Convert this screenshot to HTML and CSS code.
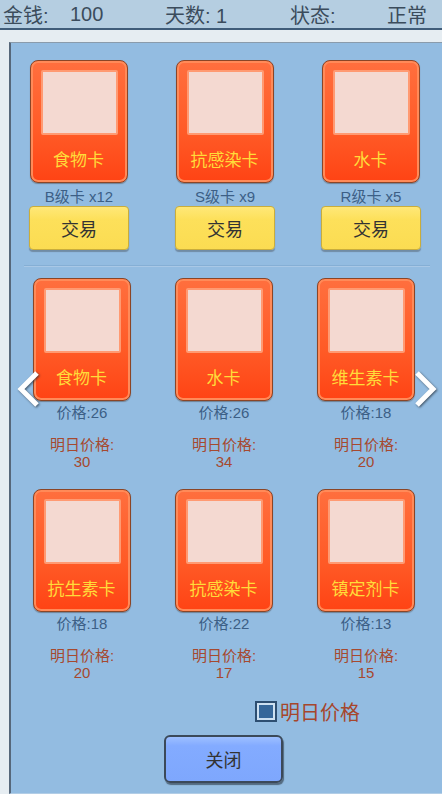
FILE: index.html
```html
<!DOCTYPE html>
<html lang="zh">
<head>
    <meta charset="UTF-8">
    <meta name="viewport" content="width=device-width, initial-scale=1.0">
    <title>卡牌交易</title>
    <link rel="stylesheet" href="styles.css">
</head>
<body>
    <div class="topbar">
        <span class="stat stat-money">金钱:</span>
        <span class="stat stat-money-val">100</span>
        <span class="stat stat-day">天数: 1</span>
        <span class="stat stat-state">状态:</span>
        <span class="stat">正常</span>
    </div>

    <div class="panel">
        <!-- owned cards -->
        <div class="owned">
            <div class="owned-item">
                <div class="card"><div class="card-pic"></div><div class="card-name">食物卡</div></div>
                <div class="grade">B级卡 x12</div>
                <button class="trade-btn">交易</button>
            </div>
            <div class="owned-item">
                <div class="card"><div class="card-pic"></div><div class="card-name">抗感染卡</div></div>
                <div class="grade">S级卡 x9</div>
                <button class="trade-btn">交易</button>
            </div>
            <div class="owned-item">
                <div class="card"><div class="card-pic"></div><div class="card-name">水卡</div></div>
                <div class="grade">R级卡 x5</div>
                <button class="trade-btn">交易</button>
            </div>
        </div>

        <div class="divider"></div>

        <!-- market -->
        <div class="market">
            <div class="market-item">
                <div class="card"><div class="card-pic"></div><div class="card-name">食物卡</div></div>
                <div class="price">价格:26</div>
                <div class="next-label">明日价格:</div>
                <div class="next-val">30</div>
            </div>
            <div class="market-item">
                <div class="card"><div class="card-pic"></div><div class="card-name">水卡</div></div>
                <div class="price">价格:26</div>
                <div class="next-label">明日价格:</div>
                <div class="next-val">34</div>
            </div>
            <div class="market-item">
                <div class="card"><div class="card-pic"></div><div class="card-name">维生素卡</div></div>
                <div class="price">价格:18</div>
                <div class="next-label">明日价格:</div>
                <div class="next-val">20</div>
            </div>
            <div class="market-item">
                <div class="card"><div class="card-pic"></div><div class="card-name">抗生素卡</div></div>
                <div class="price">价格:18</div>
                <div class="next-label">明日价格:</div>
                <div class="next-val">20</div>
            </div>
            <div class="market-item">
                <div class="card"><div class="card-pic"></div><div class="card-name">抗感染卡</div></div>
                <div class="price">价格:22</div>
                <div class="next-label">明日价格:</div>
                <div class="next-val">17</div>
            </div>
            <div class="market-item">
                <div class="card"><div class="card-pic"></div><div class="card-name">镇定剂卡</div></div>
                <div class="price">价格:13</div>
                <div class="next-label">明日价格:</div>
                <div class="next-val">15</div>
            </div>
        </div>

        <label class="toggle">
            <span class="checkbox"><span class="checkbox-fill"></span></span>
            <span class="toggle-text">明日价格</span>
        </label>

        <button class="close-btn">关闭</button>

        <svg class="arrow arrow-left" width="28" height="42" viewBox="0 0 28 42">
            <polyline points="22,5 6,21 22,37" />
        </svg>
        <svg class="arrow arrow-right" width="28" height="42" viewBox="0 0 28 42">
            <polyline points="6,5 22,21 6,37" />
        </svg>
    </div>
</body>
</html>
```

FILE: styles.css
```css
body {
    margin: 0;
    background-color: #e6edf2;
    font-family: "Liberation Sans", "Noto Sans CJK SC", sans-serif;
    width: 442px;
    height: 794px;
    overflow: hidden;
}
.topbar {
    height: 28px;
    background-color: #b5cee1;
    border-bottom: 2px solid #3f5c79;
    display: flex;
    align-items: center;
    padding-left: 3px;
    color: #3b4c5c;
    font-size: 20px;
}
.stat-money { width: 67px; }
.stat-money-val { width: 95px; }
.stat-day { width: 125px; }
.stat-state { width: 97px; }

.panel {
    position: relative;
    box-sizing: border-box;
    margin: 12px 0 0 9px;
    height: 752px;
    background-color: #93bce1;
    border-left: 2px solid #56677a;
    border-top: 1px solid #8a9bab;
    border-bottom: 1px solid #b2cde6;
    padding-top: 17px;
}

.owned {
    display: grid;
    grid-template-columns: repeat(3, 100px);
    column-gap: 46px;
    padding-left: 18px;
}
.owned-item {
    display: flex;
    flex-direction: column;
    align-items: center;
}
.card {
    box-sizing: border-box;
    width: 98px;
    height: 123px;
    border: 1px solid #8b4526;
    border-radius: 8px;
    background: linear-gradient(#ff6f3e, #ff5a26 60%, #ff4314);
    box-shadow: inset 0 0 0 2px #ff8a58, 0 1px 1px rgba(60, 40, 30, 0.4);
    padding: 9px 9px 0 10px;
    display: flex;
    flex-direction: column;
}
.card-pic {
    height: 65px;
    background-color: #f4d9d1;
    border: 2px solid #ff9a72;
    border-radius: 2px;
    box-sizing: border-box;
}
.card-name {
    flex: 1;
    display: flex;
    align-items: center;
    justify-content: center;
    color: #ffdc3a;
    font-family: "Noto Sans CJK SC", sans-serif;
    font-size: 17px;
    margin-left: -2px;
}
.grade {
    margin-top: 5px;
    line-height: 18px;
    font-size: 15px;
    color: #3c5f86;
}
.trade-btn {
    width: 100px;
    height: 44px;
    border: 1px solid #c9ad3c;
    border-radius: 4px;
    background: linear-gradient(#ffe878, #fde05a 30%, #fbdc52);
    box-shadow: 0 2px 1px rgba(70, 80, 90, 0.45);
    font-family: "Noto Sans CJK SC", sans-serif;
    font-size: 18px;
    color: #333;
    padding: 0;
}

.divider {
    margin: 15px 12px 0 13px;
    height: 1px;
    background-color: #85afd5;
    border-bottom: 1px solid #a9c8e6;
}

.market {
    display: grid;
    grid-template-columns: repeat(3, 98px);
    column-gap: 44px;
    row-gap: 19px;
    padding-left: 22px;
    margin-top: 11px;
}
.market-item {
    display: flex;
    flex-direction: column;
    align-items: center;
}
.price {
    margin-top: 3px;
    line-height: 18px;
    font-size: 15px;
    color: #3c5f86;
}
.next-label {
    margin-top: 14px;
    line-height: 17px;
    font-size: 15px;
    color: #a6492f;
}
.next-val {
    line-height: 17px;
    font-size: 15px;
    color: #a6492f;
}

.toggle {
    display: flex;
    align-items: center;
    margin: 19px 0 0 244px;
    height: 22px;
}
.checkbox {
    box-sizing: border-box;
    width: 22px;
    height: 21px;
    border: 2px solid #2d4e71;
    background-color: #cde0f1;
    padding: 2px;
    display: flex;
}
.checkbox-fill {
    flex: 1;
    background-color: #36679a;
}
.toggle-text {
    margin-left: 3px;
    font-family: "Noto Sans CJK SC", sans-serif;
    font-size: 20px;
    color: #a6462c;
}

.close-btn {
    display: block;
    margin: 13px 0 0 153px;
    width: 119px;
    height: 48px;
    border: 2px solid #3b4959;
    border-radius: 6px;
    background: linear-gradient(#9dbfff, #83abff 20%, #7ea7fd);
    box-shadow: 1px 2px 1px rgba(40, 50, 60, 0.6);
    font-family: "Noto Sans CJK SC", sans-serif;
    font-size: 18px;
    color: #333;
    padding: 0;
}

.arrow {
    position: absolute;
    top: 325px;
    fill: none;
    stroke: #fff;
    stroke-width: 5;
    filter: drop-shadow(1px 1px 1px rgba(30, 40, 50, 0.7));
}
.arrow-left { left: 4px; }
.arrow-right { left: 400px; }
```
